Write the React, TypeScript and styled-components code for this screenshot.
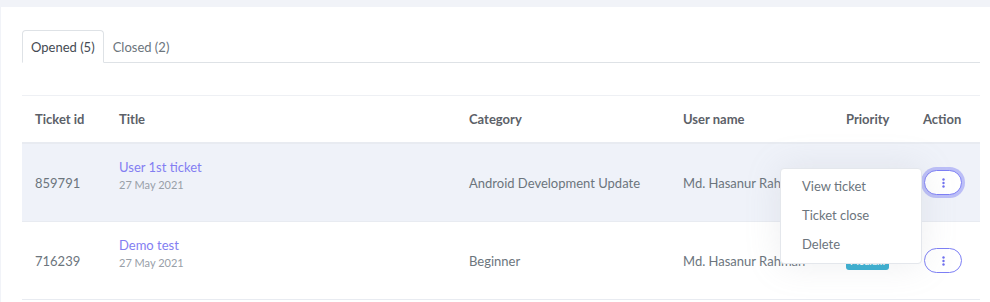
import React from 'react';
import styled, {createGlobalStyle, css} from 'styled-components';

const GlobalStyle = createGlobalStyle`
    html, body {
        margin: 0;
        padding: 0;
        background: #f1f3f8;
        overflow: hidden;
    }
    body {
        font-family: Lato, "Noto Sans", sans-serif;
        font-size: 14px;
        color: #6c757d;
    }
`;

const Page = styled.div`
    padding-top: 7px;
    width: 990px;
`;

const Card = styled.div`
    background: #fff;
    margin-left: 1px;
    padding: 23px 10px 0 21px;
    min-height: 295px;
    box-sizing: border-box;
`;

const Tabs = styled.ul`
    display: flex;
    list-style: none;
    margin: 0;
    padding: 0;
    border-bottom: 1px solid #dee2e6;
    height: 32px;
`;

const Tab = styled.li<{$active?: boolean}>`
    box-sizing: border-box;
    height: 33px;
    padding: 0 8px;
    display: flex;
    align-items: center;
    font-size: 13px;
    border: 1px solid transparent;
    border-radius: 4px 4px 0 0;
    color: #6c757d;
    cursor: pointer;
    ${p => p.$active && css`
        border-color: #dee2e6 #dee2e6 #fff;
        background: #fff;
        color: #444a52;
    `}
`;

const TableWrap = styled.div`
    margin-top: 32px;
`;

const Table = styled.table`
    width: 958px;
    border-collapse: collapse;
    table-layout: fixed;
    border-top: 1px solid #eef0f4;
`;

const Th = styled.th`
    text-align: left;
    font-weight: 700;
    font-size: 13px;
    color: #5c6168;
    padding: 0 13px;
    height: 46px;
    border-bottom: 2px solid #e8ebf1;
`;

const Tr = styled.tr<{$active?: boolean}>`
    background: ${p => p.$active ? '#eff2f9' : '#fff'};
    border-bottom: 1px solid #e8ebf1;
`;

const Td = styled.td`
    padding: 0 13px;
    height: 77px;
    font-size: 13px;
    color: #6c757d;
    white-space: nowrap;
    overflow: visible;
`;

const TitleBlock = styled.div`
    margin-bottom: 16px;
`;

const TitleLink = styled.a`
    display: block;
    color: #837ef2;
    font-size: 13px;
    text-decoration: none;
`;

const Date = styled.div`
    margin-top: 3px;
    font-size: 11px;
    color: #98a0a8;
`;

const Badge = styled.span`
    display: inline-block;
    background: #39afd1;
    color: #fff;
    font-size: 9.5px;
    font-weight: 700;
    padding: 3px 4px;
    border-radius: 3px;
`;

const ActionHolder = styled.div`
    position: relative;
    display: inline-block;
    vertical-align: middle;
    margin-left: 1px;
`;

const DotsButton = styled.button<{$focused?: boolean}>`
    width: 38px;
    height: 25px;
    border: 1px solid #7d7ff5;
    border-radius: 13px;
    background: #fff;
    display: flex;
    align-items: center;
    justify-content: center;
    padding: 0;
    cursor: pointer;
    ${p => p.$focused && css`
        box-shadow: 0 0 0 3px rgba(124, 126, 245, 0.45);
    `}
`;

const Menu = styled.div`
    position: absolute;
    top: -2px;
    right: calc(100% + 2px);
    width: 142px;
    box-sizing: border-box;
    background: #fff;
    border: 1px solid #e4e7ec;
    border-radius: 4px;
    box-shadow: 0 0 35px rgba(154, 161, 171, 0.18);
    padding: 3px 0 4px;
    z-index: 5;
`;

const MenuItem = styled.div`
    padding: 0 21px;
    line-height: 29px;
    font-size: 13px;
    color: #6c757d;
    cursor: pointer;
`;

const Dots = () => (
    <svg width="3" height="10" viewBox="0 0 3 10">
        <circle cx="1.5" cy="1.5" r="1.2" fill="#6f70ef"/>
        <circle cx="1.5" cy="5" r="1.2" fill="#6f70ef"/>
        <circle cx="1.5" cy="8.5" r="1.2" fill="#6f70ef"/>
    </svg>
);

const tickets = [
    {id: '859791', title: 'User 1st ticket', date: '27 May 2021', category: 'Android Development Update', user: 'Md. Hasanur Rahman', priority: 'Medium'},
    {id: '716239', title: 'Demo test', date: '27 May 2021', category: 'Beginner', user: 'Md. Hasanur Rahman', priority: 'Medium'},
];

const App = () => {
    const open = 0;
    return <Page>
        <GlobalStyle/>
        <Card>
            <Tabs>
                <Tab $active>Opened (5)</Tab>
                <Tab>Closed (2)</Tab>
            </Tabs>
            <TableWrap>
                <Table>
                    <colgroup>
                        <col style={{width: 84}}/>
                        <col style={{width: 350}}/>
                        <col style={{width: 214}}/>
                        <col style={{width: 163}}/>
                        <col style={{width: 77}}/>
                        <col style={{width: 70}}/>
                    </colgroup>
                    <thead>
                        <tr>
                            <Th>Ticket id</Th>
                            <Th>Title</Th>
                            <Th>Category</Th>
                            <Th>User name</Th>
                            <Th>Priority</Th>
                            <Th>Action</Th>
                        </tr>
                    </thead>
                    <tbody>
                        {tickets.map((t, i) => (
                            <Tr key={t.id} $active={i === open}>
                                <Td>{t.id}</Td>
                                <Td>
                                    <TitleBlock>
                                        <TitleLink href="#">{t.title}</TitleLink>
                                        <Date>{t.date}</Date>
                                    </TitleBlock>
                                </Td>
                                <Td>{t.category}</Td>
                                <Td>{t.user}</Td>
                                <Td><Badge>{t.priority}</Badge></Td>
                                <Td>
                                    <ActionHolder>
                                        <DotsButton $focused={i === open}><Dots/></DotsButton>
                                        {i === open && <Menu>
                                            <MenuItem>View ticket</MenuItem>
                                            <MenuItem>Ticket close</MenuItem>
                                            <MenuItem>Delete</MenuItem>
                                        </Menu>}
                                    </ActionHolder>
                                </Td>
                            </Tr>
                        ))}
                    </tbody>
                </Table>
            </TableWrap>
        </Card>
    </Page>;
};

export default App;
